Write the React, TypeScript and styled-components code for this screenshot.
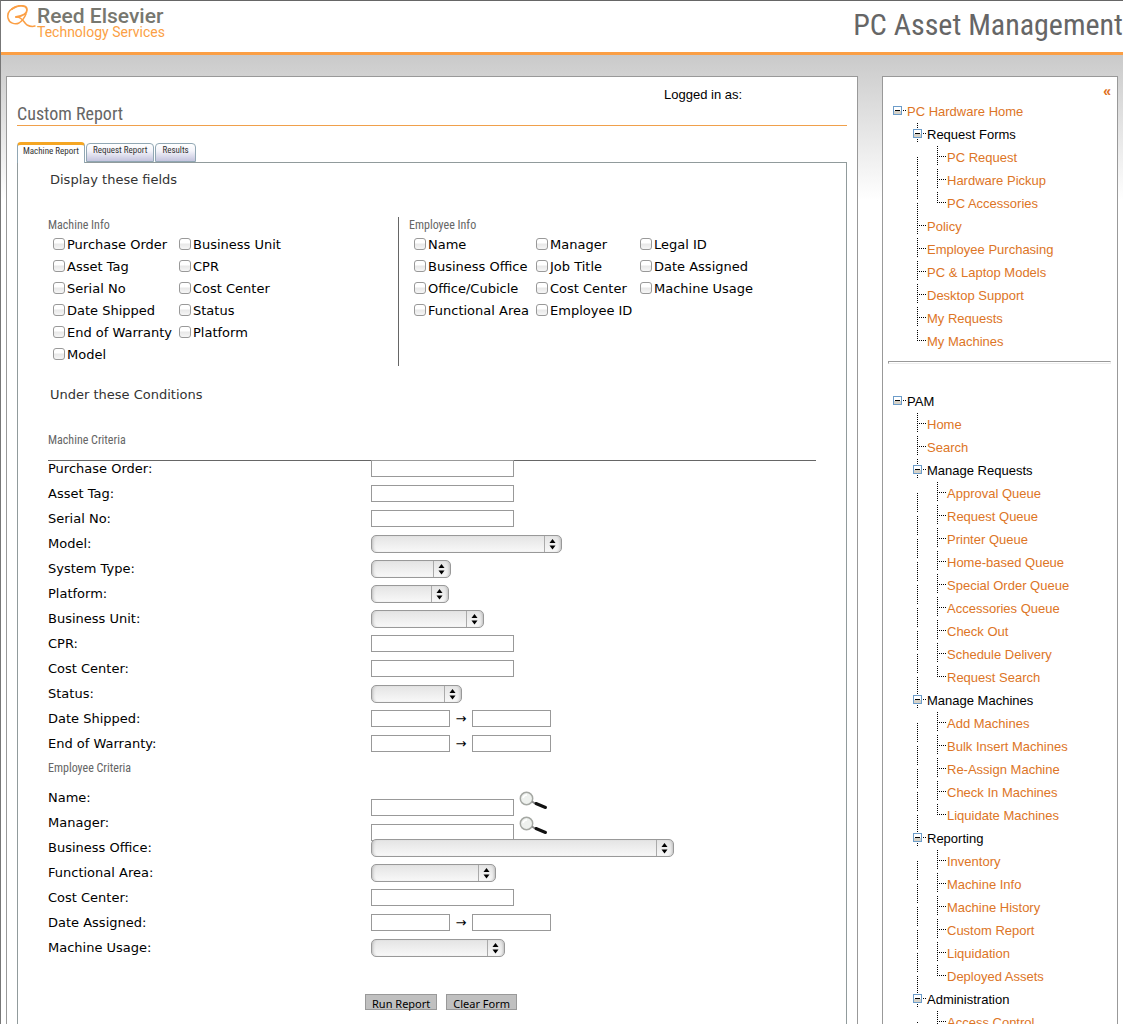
import React from "react";
import styled, { createGlobalStyle, css } from "styled-components";

const sans = `"Liberation Sans", Arial, sans-serif`;
const narrow = `"Roboto Condensed", "Arial Narrow", sans-serif`;
const wide = `Verdana, "DejaVu Sans", sans-serif`;

const GlobalStyle = createGlobalStyle`
  * { box-sizing: border-box; }
  body { margin: 0; background: #fff; font: 13px ${sans}; color: #000; overflow-x: hidden; }
`;

const Page = styled.div`
  display: flex;
  flex-direction: column;
  min-height: 100vh;
  border-top: 1px solid #666;
  border-left: 1px solid #777;
`;

const Header = styled.header`
  display: flex;
  justify-content: space-between;
  height: 54px;
  border-bottom: 3px solid #fb9f45;
  background: #fff;
`;

const Brand = styled.div`
  display: flex;
  gap: 1px;
  padding: 4px 0 0 6px;
`;

const BrandText = styled.div`
  padding-top: 1px;
  font-family: Roboto, sans-serif;
`;

const BrandName = styled.div`
  font-size: 21px;
  line-height: 20px;
  font-weight: 500;
  color: #77776f;
`;

const BrandUnit = styled.div`
  font-size: 14px;
  line-height: 13px;
  color: #fb9f45;
`;

const AppName = styled.div`
  font: 30px/48px ${narrow};
  color: #666;
  white-space: nowrap;
`;

const Body = styled.div`
  flex: 1;
  display: flex;
  gap: 24px;
  padding: 21px 5px 0;
  background: linear-gradient(#cacaca, #fff 145px);
`;

const panel = css`
  border: 1px solid #999;
  border-bottom: 0;
  background: #fff;
`;

const Main = styled.main`
  ${panel}
  flex: 1;
  min-width: 0;
  display: flex;
  flex-direction: column;
  padding: 10px 10px 0;
`;

const Session = styled.div`
  width: 183px;
  align-self: flex-end;
  line-height: 16px;
`;

const Title = styled.h1`
  margin: 0 0 16px;
  border-bottom: 1px solid #f0a04b;
  font: 18px/22px ${narrow};
  color: #666;
`;

const Tabs = styled.div`
  display: flex;
  align-items: flex-end;
  gap: 1px;
  height: 20px;
`;

const Tab = styled.button<{ $active?: boolean }>`
  height: 19px;
  margin: 0;
  padding: 0 6px 6px;
  border: 1px solid #91a7b4;
  border-radius: 4px 4px 0 0;
  background: linear-gradient(#fff, #f4f4fa 40%, #c4c4de);
  font: 9px/12px ${narrow};
  color: #333;
  ${(p) =>
    p.$active &&
    css`
      height: 21px;
      margin-bottom: -1px;
      padding: 0 5px 6px;
      border-top: 3px solid #f5a623;
      border-bottom: 0;
      background: #fff;
      z-index: 1;
    `}
`;

const TabPanel = styled.form`
  flex: 1;
  border: 1px solid #919b9c;
  border-bottom: 0;
  padding: 8px 30px 13px;
  font-family: ${wide};
`;

const Legend = styled.h2`
  margin: 0;
  padding-left: 2px;
  font: 13px/18px ${wide};
  color: #333;
`;

const GroupTitle = styled.h3<{ $height?: number }>`
  margin: 0;
  font: 12px/${(p) => p.$height ?? 16}px ${narrow};
  color: #666;
`;

const FieldGroups = styled.div`
  display: flex;
  margin: 28px 0 20px;
`;

const FieldGroup = styled.section`
  min-height: 149px;
  width: 350px;
  & + & {
    flex: 1;
    border-left: 1px solid #666;
    padding-left: 10px;
  }
`;

const CheckGrid = styled.div`
  display: flex;
  padding: 0 0 0 5px;
`;

const CheckColumn = styled.div<{ $width: number }>`
  width: ${(p) => p.$width}px;
`;

const CheckLabel = styled.label`
  display: flex;
  align-items: center;
  gap: 2px;
  height: 22px;
  white-space: nowrap;
`;

const CheckBox = styled.input`
  appearance: none;
  flex: none;
  width: 12px;
  height: 12px;
  margin: 0;
  border: 1px solid #999;
  border-radius: 3px;
  background: linear-gradient(#fff 40%, #e8e8e8 50%, #f6f6f6);
  &:checked { background: #8aaedc; }
`;

const CriteriaTitle = styled.div`
  margin: 28px 0 0;
`;

const Criteria = styled.div<{ $ruled?: boolean }>`
  margin: ${(p) => (p.$ruled ? 8 : 5)}px 0 0;
  ${(p) => p.$ruled && css`
    background: linear-gradient(#666, #666) 0 4px / 100% 1px no-repeat;
  `}
`;

const Row = styled.div`
  display: grid;
  grid-template: 25px / 323px 1fr;
  align-items: center;
`;

const Control = styled.div`
  display: flex;
  align-items: center;
`;

const TextBox = styled.input<{ $short?: boolean }>`
  width: ${(p) => (p.$short ? 79 : 143)}px;
  height: 17px;
  padding: 0 2px;
  border: 1px solid #999;
  background: #fff;
`;

const Arrow = styled.span`
  width: 22px;
  text-align: center;
`;

const LookupBox = styled.div`
  display: flex;
  gap: 5px;
  height: 37px;
  align-items: flex-end;
`;

const LookupButton = styled.button`
  height: 25px;
  padding: 0;
  border: 0;
  background: none;
  display: flex;
`;

const SelectBox = styled.div<{ $width: number }>`
  position: relative;
  width: ${(p) => p.$width}px;
  height: 18px;
  svg {
    position: absolute;
    right: 1px;
    top: 1px;
    pointer-events: none;
  }
`;

const Select = styled.select`
  appearance: none;
  display: block;
  width: 100%;
  height: 18px;
  border: 1px solid #999;
  border-radius: 5px;
  background: linear-gradient(#e4e4e4, #f8f8f8);
  box-shadow: inset 3px 0 3px -2px #bbb, inset -3px 0 3px -2px #bbb;
`;

const Actions = styled.div`
  display: flex;
  gap: 9px;
  margin: 34px 0 0 317px;
`;

const ActionButton = styled.button`
  height: 16px;
  padding: 1px 6px 0;
  border: 1px solid #999;
  background: #c0c0c0;
  font: 11px/15px "Noto Sans", sans-serif;
`;

const Sidebar = styled.nav`
  ${panel}
  flex: none;
  width: 236px;
  padding: 5px 6px 0 5px;
`;

const Collapse = styled.button`
  display: block;
  margin: 0 0 0 auto;
  padding: 0;
  border: 0;
  background: none;
  font: bold 14px/18px ${sans};
  color: #e0701c;
`;

const Tree = styled.ul<{ $level?: number }>`
  list-style: none;
  margin: 0;
  padding: 0 0 0 ${(p) => (p.$level ? 0 : 5)}px;
`;

const Node = styled.div`
  display: flex;
  height: 23px;
  line-height: 23px;
  white-space: nowrap;
  svg { flex: none; overflow: visible; }
`;

const Indent = styled.span`
  flex: none;
  width: 20px;
`;

const NodeLink = styled.a`
  color: #dd7526;
  text-decoration: none;
`;

const Divider = styled.hr`
  height: 3px;
  margin: 8px 0 26px;
  border: 1px solid;
  border-color: #999 #eee #eee #999;
`;

const ReedMark = () => (
  <svg width="29" height="26" viewBox="0 0 29 26" fill="none" stroke="#fb9f45" strokeLinecap="round" aria-hidden="true">
    <path d="M5 4C9 0 20 -1 20 5C20 9 15 11 9 12" strokeWidth="1.8" />
    <path d="M9 2C3 4 0 8 1 13C2 18 8 20 12 18C15 16 17 14 19 9" strokeWidth="1.5" />
    <path d="M9 12C15 11 16 17 20 20C22 21 25 22 28 21" strokeWidth="1.5" />
  </svg>
);

const Magnifier = () => (
  <svg width="29" height="19" viewBox="0 0 29 19" aria-hidden="true">
    <circle cx="7.5" cy="7.5" r="6.2" fill="#eef1ee" stroke="#a5a8a3" strokeWidth="1.5" />
    <path d="M4 7Q5 4 8 4" stroke="#fff" strokeWidth="1.6" fill="none" />
    <path d="M13 10.500L16 12.500" stroke="#888" strokeWidth="2" />
    <path d="M17 12.500L26.500 16.500" stroke="#111" strokeWidth="3" strokeLinecap="round" />
  </svg>
);

const Stepper = () => (
  <svg width="17" height="16" viewBox="0 0 17 16" aria-hidden="true">
    <path d="M.5 0V16" stroke="#aaa" />
    <path d="M5.500 7L8.500 3L11.500 7ZM5.500 9.500L8.500 13.500L11.500 9.500Z" fill="#000" />
  </svg>
);

type JointKind = "root" | "folder" | "item" | "last";

const Joint = ({ kind }: { kind: JointKind }) => {
  const open = kind === "root" || kind === "folder";
  return (
    <svg width="14" height="19" viewBox="0 0 14 19" shapeRendering="crispEdges" aria-hidden="true">
      {kind !== "root" && (
        <path d={kind === "last" ? "M4.500 0V11" : "M4.500 0V19"} stroke="#000" strokeDasharray="1 1" />
      )}
      <path d="M6 10.500H14" stroke="#000" strokeDasharray="1 1" />
      {open && (
        <>
          <rect x="0" y="6" width="9" height="9" fill="#6c9cc9" />
          <rect x="1" y="7" width="7" height="4" fill="#fff" />
          <rect x="1" y="11" width="7" height="3" fill="#d6d2c8" />
          <path d="M2 10.500H7" stroke="#000" />
        </>
      )}
    </svg>
  );
};

const Guide = () => (
  <svg width="20" height="23" viewBox="0 0 20 23" shapeRendering="crispEdges" aria-hidden="true">
    <path d="M4.500 11V30" stroke="#000" strokeDasharray="1 1" />
  </svg>
);

type Item = { name: string; link?: boolean; children?: string[] };

const Menu = ({ root, link, items }: { root: string; link?: boolean; items: Item[] }) => (
  <Tree>
    <li>
      <Node>
        <Joint kind="root" />
        {link ? <NodeLink href="#home">{root}</NodeLink> : root}
      </Node>
      <Tree $level={1}>
        {items.map((item, i) => (
          <li key={item.name}>
            <Node>
              <Indent />
              <Joint kind={item.children ? "folder" : i === items.length - 1 ? "last" : "item"} />
              {item.children ? item.name : <NodeLink href="#page">{item.name}</NodeLink>}
            </Node>
            {item.children && (
              <Tree $level={2}>
                {item.children.map((child, j) => (
                  <li key={child}>
                    <Node>
                      <Indent />
                      <Guide />
                      <Joint kind={j === item.children!.length - 1 && child !== "Access Control" ? "last" : "item"} />
                      <NodeLink href="#page">{child}</NodeLink>
                    </Node>
                  </li>
                ))}
              </Tree>
            )}
          </li>
        ))}
      </Tree>
    </li>
  </Tree>
);

const hardwareMenu: Item[] = [
  { name: "Request Forms", children: ["PC Request", "Hardware Pickup", "PC Accessories"] },
  { name: "Policy" },
  { name: "Employee Purchasing" },
  { name: "PC & Laptop Models" },
  { name: "Desktop Support" },
  { name: "My Requests" },
  { name: "My Machines" },
];

const pamMenu: Item[] = [
  { name: "Home" },
  { name: "Search" },
  {
    name: "Manage Requests",
    children: ["Approval Queue", "Request Queue", "Printer Queue", "Home-based Queue", "Special Order Queue", "Accessories Queue", "Check Out", "Schedule Delivery", "Request Search"],
  },
  {
    name: "Manage Machines",
    children: ["Add Machines", "Bulk Insert Machines", "Re-Assign Machine", "Check In Machines", "Liquidate Machines"],
  },
  {
    name: "Reporting",
    children: ["Inventory", "Machine Info", "Machine History", "Custom Report", "Liquidation", "Deployed Assets"],
  },
  { name: "Administration", children: ["Access Control"] },
];

type Column = { width: number; names: string[] };

const machineColumns: Column[] = [
  { width: 126, names: ["Purchase Order", "Asset Tag", "Serial No", "Date Shipped", "End of Warranty", "Model"] },
  { width: 126, names: ["Business Unit", "CPR", "Cost Center", "Status", "Platform"] },
];

const employeeColumns: Column[] = [
  { width: 122, names: ["Name", "Business Office", "Office/Cubicle", "Functional Area"] },
  { width: 104, names: ["Manager", "Job Title", "Cost Center", "Employee ID"] },
  { width: 120, names: ["Legal ID", "Date Assigned", "Machine Usage"] },
];

const Checks = ({ columns }: { columns: Column[] }) => (
  <CheckGrid>
    {columns.map((column) => (
      <CheckColumn key={column.names[0]} $width={column.width}>
        {column.names.map((name) => (
          <CheckLabel key={name}>
            <CheckBox type="checkbox" />
            {name}
          </CheckLabel>
        ))}
      </CheckColumn>
    ))}
  </CheckGrid>
);

type Field = { label: string; kind: "text" | "range" | "lookup" | "select"; width?: number };

const machineFields: Field[] = [
  { label: "Purchase Order", kind: "text" },
  { label: "Asset Tag", kind: "text" },
  { label: "Serial No", kind: "text" },
  { label: "Model", kind: "select", width: 191 },
  { label: "System Type", kind: "select", width: 80 },
  { label: "Platform", kind: "select", width: 78 },
  { label: "Business Unit", kind: "select", width: 113 },
  { label: "CPR", kind: "text" },
  { label: "Cost Center", kind: "text" },
  { label: "Status", kind: "select", width: 91 },
  { label: "Date Shipped", kind: "range" },
  { label: "End of Warranty", kind: "range" },
];

const employeeFields: Field[] = [
  { label: "Name", kind: "lookup" },
  { label: "Manager", kind: "lookup" },
  { label: "Business Office", kind: "select", width: 303 },
  { label: "Functional Area", kind: "select", width: 125 },
  { label: "Cost Center", kind: "text" },
  { label: "Date Assigned", kind: "range" },
  { label: "Machine Usage", kind: "select", width: 134 },
];

const FieldRow = ({ field, group }: { field: Field; group: string }) => {
  const id = `${group}-${field.label.toLowerCase().replace(/ /g, "-")}`;
  return (
    <Row>
      <label htmlFor={id}>{field.label}:</label>
      <Control>
        {field.kind === "text" && <TextBox id={id} type="text" />}
        {field.kind === "range" && (
          <>
            <TextBox id={id} type="text" $short />
            <Arrow>→</Arrow>
            <TextBox type="text" aria-label={`${field.label} until`} $short />
          </>
        )}
        {field.kind === "lookup" && (
          <LookupBox>
            <TextBox id={id} type="text" />
            <LookupButton type="button" aria-label={`Find ${field.label}`}>
              <Magnifier />
            </LookupButton>
          </LookupBox>
        )}
        {field.kind === "select" && (
          <SelectBox $width={field.width ?? 80}>
            <Select id={id}>
              <option value="" />
            </Select>
            <Stepper />
          </SelectBox>
        )}
      </Control>
    </Row>
  );
};

export default function App() {
  return (
    <Page>
      <GlobalStyle />
      <Header>
        <Brand>
          <ReedMark />
          <BrandText>
            <BrandName>Reed Elsevier</BrandName>
            <BrandUnit>Technology Services</BrandUnit>
          </BrandText>
        </Brand>
        <AppName>PC Asset Management</AppName>
      </Header>
      <Body>
        <Main>
          <Session>Logged in as:</Session>
          <Title>Custom Report</Title>
          <Tabs role="tablist">
            <Tab type="button" role="tab" aria-selected $active>Machine Report</Tab>
            <Tab type="button" role="tab">Request Report</Tab>
            <Tab type="button" role="tab">Results</Tab>
          </Tabs>
          <TabPanel>
            <Legend>Display these fields</Legend>
            <FieldGroups>
              <FieldGroup>
                <GroupTitle>Machine Info</GroupTitle>
                <Checks columns={machineColumns} />
              </FieldGroup>
              <FieldGroup>
                <GroupTitle>Employee Info</GroupTitle>
                <Checks columns={employeeColumns} />
              </FieldGroup>
            </FieldGroups>
            <Legend>Under these Conditions</Legend>
            <CriteriaTitle>
              <GroupTitle>Machine Criteria</GroupTitle>
            </CriteriaTitle>
            <Criteria $ruled>
              {machineFields.map((f) => <FieldRow key={f.label} field={f} group="machine" />)}
            </Criteria>
            <GroupTitle $height={24}>Employee Criteria</GroupTitle>
            <Criteria>
              {employeeFields.map((f) => <FieldRow key={f.label} field={f} group="employee" />)}
            </Criteria>
            <Actions>
              <ActionButton type="button">Run Report</ActionButton>
              <ActionButton type="reset">Clear Form</ActionButton>
            </Actions>
          </TabPanel>
        </Main>
        <Sidebar>
          <Collapse type="button" aria-label="Collapse menu">«</Collapse>
          <Menu root="PC Hardware Home" link items={hardwareMenu} />
          <Divider />
          <Menu root="PAM" items={pamMenu} />
        </Sidebar>
      </Body>
    </Page>
  );
}
